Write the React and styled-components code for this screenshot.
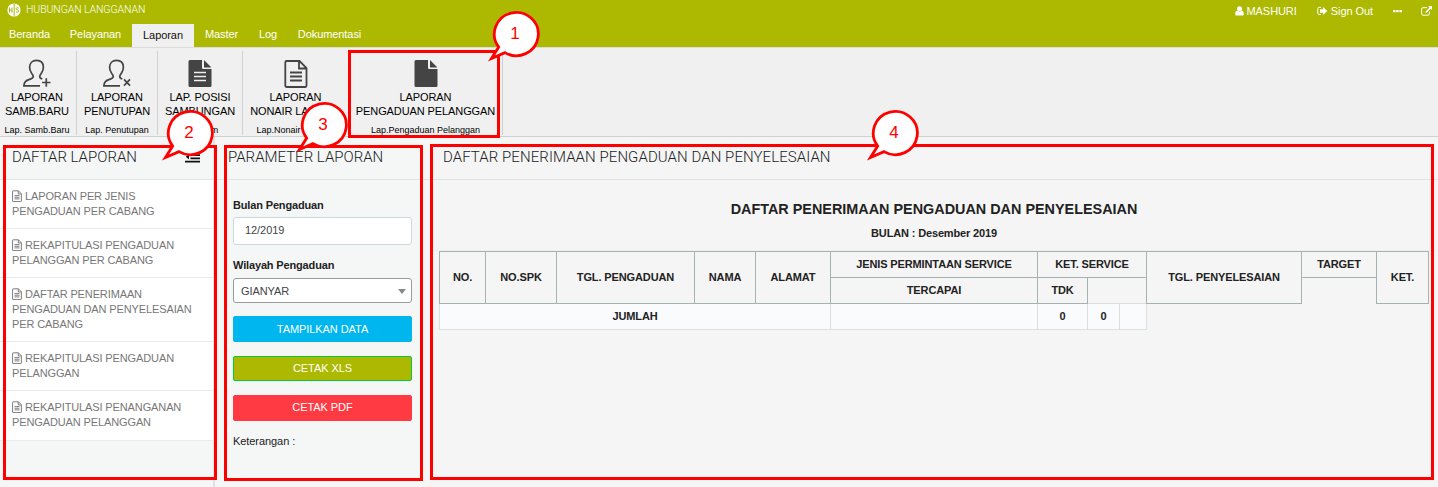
import React from 'react';
import styled, { createGlobalStyle } from 'styled-components';

const GlobalStyle = createGlobalStyle`
  * { box-sizing: border-box; }
  html, body { margin: 0; padding: 0; }
  body {
    font-family: "Liberation Sans", Arial, sans-serif;
    font-size: 11px;
    letter-spacing: -0.07px;
    color: #222;
    background: #f5f5f5;
    overflow: hidden;
  }
`;

const Page = styled.div`
  position: relative;
  width: 1438px;
  height: 487px;
  display: flex;
  flex-direction: column;
  overflow: hidden;
`;

const Header = styled.header`
  height: 47px;
  background: #acb900;
  color: #fff;
  display: flex;
  flex-direction: column;
`;

const TitleBar = styled.div`
  height: 24px;
  padding: 0 6px 0 7px;
  display: flex;
  justify-content: space-between;
`;

const Brand = styled.div`
  display: flex;
  align-items: center;
  gap: 5px;
  height: 18px;
  padding-top: 1px;
  font-family: Roboto, "Liberation Sans", sans-serif;
  font-weight: 300;
  font-size: 10.5px;
  letter-spacing: -0.1px;
`;

const UserLinks = styled.div`
  display: flex;
  align-items: center;
  height: 22px;
`;

const UserLink = styled.span`
  display: flex;
  align-items: center;
  gap: 3px;
  margin-left: ${(p) => p.$gap || 0}px;
`;

const Tabs = styled.nav`
  display: flex;
  height: 23px;
`;

const Tab = styled.span`
  width: ${(p) => p.$width}px;
  padding-left: ${(p) => (p.$active ? 0 : 1)}px;
  line-height: ${(p) => (p.$active ? 23 : 21)}px;
  text-align: center;
  color: ${(p) => (p.$active ? '#111' : '#fff')};
  background: ${(p) => (p.$active ? '#f0f0f0' : 'transparent')};
`;

const Ribbon = styled.div`
  height: 90px;
  background: #f0f0f0;
  border-top: 1px solid #dcdcdc;
  border-bottom: 1px solid #cfd1d1;
  display: flex;
  padding: 3px 0 1px;
`;

const RibbonGroup = styled.div`
  width: ${(p) => p.$width}px;
  border-right: 1px solid #d0d0d0;
  padding-top: 8px;
  padding-right: ${(p) => p.$shift || 0}px;
  display: flex;
  flex-direction: column;
  align-items: center;
  color: #000;
  white-space: nowrap;
  > svg { flex: none; }
`;

const RibbonLabel = styled.div`
  margin-top: 2px;
  line-height: 14px;
  text-align: center;
  letter-spacing: -0.1px;
`;

const RibbonCaption = styled.div`
  margin-top: 5px;
  font-size: 9px;
  line-height: 14px;
  letter-spacing: 0;
`;

const Main = styled.main`
  flex: 1;
  display: flex;
`;

const Sidebar = styled.aside`
  width: 215px;
  background: #f5f7f7;
  border-right: 2px solid #dde4e8;
`;

const Params = styled.section`
  width: 215px;
  background: #f5f7f7;
`;

const Report = styled.section`
  flex: 1;
  background: #f5f5f5;
`;

const PanelHead = styled.div`
  height: 43px;
  border-bottom: 1px solid #dde5e7;
  padding: 0 13px 3px ${(p) => p.$left}px;
  display: flex;
  align-items: center;
  justify-content: space-between;
`;

const PanelTitle = styled.h2`
  margin: 0;
  font-family: Roboto, "Liberation Sans", sans-serif;
  font-weight: 300;
  font-size: 15px;
  color: #222;
  white-space: nowrap;
  letter-spacing: ${(p) => p.$spacing || '0'};
`;

const ReportList = styled.ul`
  list-style: none;
  margin: 0;
  padding: 0;
`;

const ReportItem = styled.li`
  padding: 9px 0 9px 12px;
  line-height: 15px;
  color: #777;
  background: #fff;
  border-bottom: 1px solid #e6edf0;
  white-space: nowrap;
  letter-spacing: -0.12px;
  svg { vertical-align: -2px; margin-right: 3px; }
  &:last-child { padding-bottom: 10px; }
`;

const Form = styled.div`
  width: 179px;
  margin-left: 18px;
  padding-top: 18px;
`;

const Label = styled.label`
  display: block;
  font-weight: 700;
  line-height: 15px;
  margin-bottom: ${(p) => p.$after}px;
  letter-spacing: -0.15px;
`;

const TextField = styled.div`
  height: 28px;
  border: 1px solid #cbd9de;
  border-radius: 3px;
  background: #fff;
  padding-left: 11px;
  line-height: 25px;
  color: #444;
  margin-bottom: 13px;
`;

const SelectField = styled.div`
  height: 25px;
  border: 1px solid #9b9b9b;
  border-radius: 3px;
  background: #fff;
  padding: 1px 5px 0 7px;
  display: flex;
  align-items: center;
  justify-content: space-between;
  color: #444;
  margin-bottom: 13px;
`;

const Caret = styled.span`
  border: 4px solid transparent;
  border-top: 5px solid #888;
  border-bottom: 0;
`;

const ActionButton = styled.button`
  display: block;
  width: 100%;
  height: ${(p) => p.$height}px;
  margin: 0 0 14px;
  padding: 0 0 ${(p) => p.$lift || 0}px;
  border: 1px solid ${(p) => p.$border || p.$color};
  border-radius: 2px;
  background: ${(p) => p.$color};
  color: #fff;
  font: inherit;
  letter-spacing: inherit;
`;

const ReportHeading = styled.div`
  height: 70px;
  padding: 20px 0 0;
  text-align: center;
  font-weight: 700;
`;

const ReportName = styled.div`
  font-size: 14.4px;
  line-height: 18px;
  letter-spacing: 0;
`;

const ReportMonth = styled.div`
  line-height: 14px;
  margin-top: 8px;
  letter-spacing: -0.15px;
`;

const TableArea = styled.div`
  border-top: 1px solid #e9eff0;
  padding-left: 9px;
`;

const Table = styled.table`
  border-collapse: collapse;
  table-layout: fixed;
  width: 990px;
  font-size: 11px;
  letter-spacing: -0.12px;
`;

const Th = styled.th`
  border: 1px solid #a6b1b2;
  height: 26px;
  padding: 0 0 2px;
  text-align: center;
  vertical-align: middle;
`;

const Td = styled.td`
  border: 1px solid #dcdfe0;
  background: #fafbfd;
  height: 26px;
  padding: 0 0 2px;
  text-align: center;
  font-weight: 700;
`;

const Highlight = styled.div`
  position: absolute;
  left: ${(p) => p.$x}px;
  top: ${(p) => p.$y}px;
  width: ${(p) => p.$w}px;
  height: ${(p) => p.$h}px;
  border: 3px solid #f00;
`;

const Callout = styled.div`
  position: absolute;
  left: ${(p) => p.$x - 31}px;
  top: ${(p) => p.$y - 25}px;
  width: 56px;
  height: 56px;
  svg { display: block; }
`;

const CalloutNumber = styled.span`
  position: absolute;
  left: 8px;
  top: 4px;
  width: 44px;
  line-height: 44px;
  text-align: center;
  font-size: 17px;
  color: #f00;
`;

const BrandLogo = () => (
  <svg width="14" height="14" viewBox="0 0 14 14">
    <circle cx="7" cy="7" r="6.6" fill="#fff" />
    <g fill="none" stroke="#acb900" strokeWidth="1">
      <path d="M2.500 4.600v5M5 4.600v5M2.500 7.100H5M7.200 1v12" />
      <path d="M11.700 5.200c-1-.8-2.700-.6-2.700.5 0 1.400 2.700.9 2.700 2.400 0 1.200-1.900 1.400-2.900.5" />
    </g>
  </svg>
);

const PersonIcon = ({ mark }) => (
  <svg width="30" height="29" viewBox="0 0 30 29" fill="none" stroke="#444" strokeWidth="1.7">
    <path d="M18 26.800H1.900c0-3.800 1.700-5.300 5.600-6.400 2.600-.8 3.800-1.300 3.800-2.900 0-1.100-.8-1.900-1.800-3.400C8.200 12.200 7.600 10.300 7.600 8.300c0-4.300 2.700-6.900 6.900-6.900s6.900 2.600 6.900 6.900c0 2-.6 3.900-1.900 5.800-1 1.500-1.800 2.300-1.800 3.400 0 1.300.8 1.900 2.600 2.500" />
    {mark === 'plus' ? <path d="M24.300 19.300v8.400M20.100 23.500h8.400" /> : <path d="M22 20.400l6 6.200M28 20.400l-6 6.200" />}
  </svg>
);

const UserIcon = () => (
  <svg width="9" height="10" viewBox="0 0 9 10" fill="#fff">
    <circle cx="4.500" cy="2.800" r="2.500" />
    <path d="M2.100 4.500C.7 4.900.2 6.300.2 8c0 1 .6 1.500 1.500 1.500h5.600c.9 0 1.500-.5 1.500-1.500 0-1.700-.5-3.100-1.900-3.500-1.300 1.200-3.500 1.200-4.800 0z" />
  </svg>
);

const SignOutIcon = () => (
  <svg width="11" height="10" viewBox="0 0 11 10">
    <path d="M4 1.300H2.200C1.300 1.300.8 1.800.8 2.600v4.600c0 .8.5 1.300 1.400 1.300H4" fill="none" stroke="#fff" />
    <path d="M6 1l4.300 4L6 8.900V6.700H3V3.200h3z" fill="#fff" />
  </svg>
);

const MoreIcon = () => (
  <svg width="9" height="4" viewBox="0 0 9 4" fill="#fff">
    <rect x="0" y="1" width="2.500" height="2.200" rx=".5" />
    <rect x="3.200" y="1" width="2.500" height="2.200" rx=".5" />
    <rect x="6.400" y="1" width="2.500" height="2.200" rx=".5" />
  </svg>
);

const ExternalIcon = () => (
  <svg width="11" height="10" viewBox="0 0 11 10">
    <path d="M6 1.700H2C1.200 1.700.6 2.200.6 3v4.800c0 .8.6 1.400 1.400 1.400h5c.8 0 1.400-.6 1.400-1.400V5.700" fill="none" stroke="#fff" />
    <path d="M7 0h4v4L9.600 2.700 5.300 7 4.200 5.900l4.300-4.300z" fill="#fff" />
  </svg>
);

const FileIcon = ({ lines }) => (
  <svg width="24" height="29" viewBox="0 0 24 29">
    <path fill="#444" d="M2 1h12v7.500c0 .9.700 1.600 1.600 1.600h7.900V26.500A1.500 1.500 0 0 1 22 28H2a1.500 1.500 0 0 1-1.500-1.500v-24A1.500 1.500 0 0 1 2 1zM16 1.300c.4.200.7.400 1 .7l5.500 5.400c.3.300.5.600.7 1H16z" />
    {lines && <path d="M6 13.500h12M6 17.500h12M6 21.500h12" stroke="#f0f0f0" strokeWidth="1.600" />}
  </svg>
);

const FileOutlineIcon = ({ width, height, color, stroke }) => (
  <svg width={width} height={height} viewBox="0 0 24 29" fill="none" stroke={color} strokeWidth={stroke}>
    <path d="M2.500 2h13l7 7v17.800c0 .7-.5 1.200-1.200 1.200H2.500c-.7 0-1.200-.5-1.200-1.200V3.200c0-.7.5-1.200 1.200-1.200zM15 2v7.500h7.500M6 13.500h12M6 17.500h12M6 21.500h12" />
  </svg>
);

const OutdentIcon = () => (
  <svg width="15" height="12" viewBox="0 0 15 12" fill="#111">
    <path d="M0 0h15v1.800H0zM5.500 3.200H15V5H5.500zM5.500 6.400H15v1.800H5.500zM0 9.700h15v1.800H0zM4 3v5.400L.8 5.700z" />
  </svg>
);

const tabs = [
  ['Beranda', 58],
  ['Pelayanan', 74],
  ['Laporan', 62, true],
  ['Master', 54],
  ['Log', 39],
  ['Dokumentasi', 84],
];

const groups = [
  { icon: <PersonIcon mark="plus" />, lines: ['LAPORAN', 'SAMB.BARU'], caption: 'Lap. Samb.Baru', width: 77, shift: 2 },
  { icon: <PersonIcon mark="cross" />, lines: ['LAPORAN', 'PENUTUPAN'], caption: 'Lap. Penutupan', width: 81 },
  { icon: <FileIcon lines />, lines: ['LAP. POSISI', 'SAMBUNGAN'], caption: 'L. Umum', width: 85 },
  { icon: <FileOutlineIcon width={24} height={29} color="#444" stroke={1.8} />, lines: ['LAPORAN', 'NONAIR LAINNYA'], caption: 'Lap.Nonair Lainnya', width: 106 },
  { icon: <FileIcon />, lines: ['LAPORAN', 'PENGADUAN PELANGGAN'], caption: 'Lap.Pengaduan Pelanggan', width: 154 },
];

const reports = [
  ['LAPORAN PER JENIS', 'PENGADUAN PER CABANG'],
  ['REKAPITULASI PENGADUAN', 'PELANGGAN PER CABANG'],
  ['DAFTAR PENERIMAAN', 'PENGADUAN DAN PENYELESAIAN', 'PER CABANG'],
  ['REKAPITULASI PENGADUAN', 'PELANGGAN'],
  ['REKAPITULASI PENANGANAN', 'PENGADUAN PELANGGAN'],
];

const columnWidths = [46, 71, 138, 61, 75, 207, 50, 32, 27, 155, 75, 52];

const highlights = [
  [348, 50, 152, 88],
  [3, 145, 214, 335],
  [224, 145, 199, 336],
  [430, 144, 1004, 336],
];

const callouts = [
  [1, 516, 33],
  [2, 190, 132],
  [3, 324, 124],
  [4, 895, 132],
];

export default function App() {
  return (
    <Page>
      <GlobalStyle />
      <Header>
        <TitleBar>
          <Brand><BrandLogo />HUBUNGAN LANGGANAN</Brand>
          <UserLinks>
            <UserLink><UserIcon />MASHURI</UserLink>
            <UserLink $gap={20}><SignOutIcon />Sign Out</UserLink>
            <UserLink $gap={20}><MoreIcon /></UserLink>
            <UserLink $gap={19}><ExternalIcon /></UserLink>
          </UserLinks>
        </TitleBar>
        <Tabs>
          {tabs.map(([name, width, active]) => (
            <Tab key={name} $width={width} $active={active}>{name}</Tab>
          ))}
        </Tabs>
      </Header>
      <Ribbon>
        {groups.map((g) => (
          <RibbonGroup key={g.caption} $width={g.width} $shift={g.shift}>
            {g.icon}
            <RibbonLabel>{g.lines[0]}<br />{g.lines[1]}</RibbonLabel>
            <RibbonCaption>{g.caption}</RibbonCaption>
          </RibbonGroup>
        ))}
      </Ribbon>
      <Main>
        <Sidebar>
          <PanelHead $left={12}><PanelTitle>DAFTAR LAPORAN</PanelTitle><OutdentIcon /></PanelHead>
          <ReportList>
            {reports.map((lines) => (
              <ReportItem key={lines.join(' ')}>
                <FileOutlineIcon width={10} height={12} color="#777" stroke={2.3} />
                {lines.map((line, i) => (
                  <React.Fragment key={line}>{i > 0 && <br />}{line}</React.Fragment>
                ))}
              </ReportItem>
            ))}
          </ReportList>
        </Sidebar>
        <Params>
          <PanelHead $left={13}><PanelTitle>PARAMETER LAPORAN</PanelTitle></PanelHead>
          <Form>
            <Label $after={4}>Bulan Pengaduan</Label>
            <TextField>12/2019</TextField>
            <Label $after={5}>Wilayah Pengaduan</Label>
            <SelectField>GIANYAR<Caret /></SelectField>
            <ActionButton $color="#00b6ee" $height={26}>TAMPILKAN DATA</ActionButton>
            <ActionButton $color="#acb900" $border="#00cc3c" $height={25} $lift={1}>CETAK XLS</ActionButton>
            <ActionButton $color="#ff3a43" $height={26} $lift={2}>CETAK PDF</ActionButton>
            <div>Keterangan :</div>
          </Form>
        </Params>
        <Report>
          <PanelHead $left={13}><PanelTitle $spacing="0.07px">DAFTAR PENERIMAAN PENGADUAN DAN PENYELESAIAN</PanelTitle></PanelHead>
          <ReportHeading>
            <ReportName>DAFTAR PENERIMAAN PENGADUAN DAN PENYELESAIAN</ReportName>
            <ReportMonth>BULAN : Desember 2019</ReportMonth>
          </ReportHeading>
          <TableArea>
            <Table>
              <colgroup>
                {columnWidths.map((w, i) => <col key={i} width={w} />)}
              </colgroup>
              <thead>
                <tr>
                  <Th rowSpan={2}>NO.</Th>
                  <Th rowSpan={2}>NO.SPK</Th>
                  <Th rowSpan={2}>TGL. PENGADUAN</Th>
                  <Th rowSpan={2}>NAMA</Th>
                  <Th rowSpan={2}>ALAMAT</Th>
                  <Th>JENIS PERMINTAAN SERVICE</Th>
                  <Th colSpan={3}>KET. SERVICE</Th>
                  <Th rowSpan={2}>TGL. PENYELESAIAN</Th>
                  <Th>TARGET</Th>
                  <Th rowSpan={2}>KET.</Th>
                </tr>
                <tr>
                  <Th>TERCAPAI</Th>
                  <Th>TDK</Th>
                </tr>
              </thead>
              <tbody>
                <tr>
                  <Td colSpan={5}>JUMLAH</Td>
                  <Td />
                  <Td>0</Td>
                  <Td>0</Td>
                  <Td />
                </tr>
              </tbody>
            </Table>
          </TableArea>
        </Report>
      </Main>
      {highlights.map(([x, y, w, h]) => <Highlight key={x} $x={x} $y={y} $w={w} $h={h} />)}
      {callouts.map(([n, x, y]) => (
        <Callout key={n} $x={x} $y={y}>
          <svg width="56" height="56" viewBox="0 0 56 56">
            <path
              d="M13.700 39A22 21.600 0 1 1 20 44.600L6.500 50.500Z"
              fill="#fff"
              stroke="#f00"
              strokeWidth="2.800"
            />
          </svg>
          <CalloutNumber>{n}</CalloutNumber>
        </Callout>
      ))}
    </Page>
  );
}
